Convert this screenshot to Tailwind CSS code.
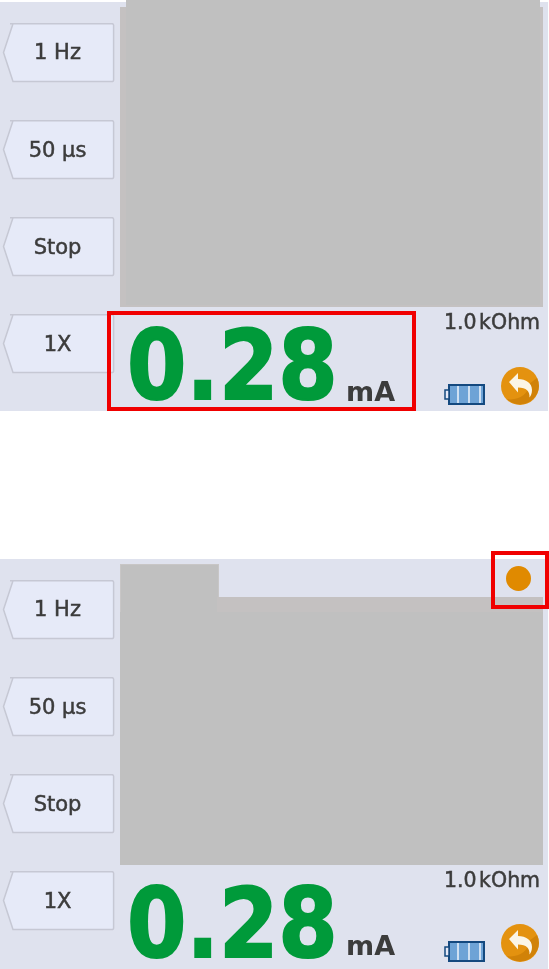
<!DOCTYPE html>
<html><head><meta charset="utf-8"><script src="https://cdn.jsdelivr.net/npm/@tailwindcss/browser@4"></script></head>
<body class="bg-white w-[549px] h-[969px] overflow-hidden relative font-['DejaVu_Sans',sans-serif]">
<svg class="hidden"><defs>
<g id="btn"><path d="M10 .7H112a1.600 1.600 0 0 1 1.600 1.600V57a1.600 1.600 0 0 1-1.600 1.600H13L3.500 29.500 13 .7Z" fill="#e6eaf8" stroke="#c6c8d4" stroke-width="1.500"/></g>
<g id="batt"><rect x="5" y="1" width="35" height="19" fill="#6ea3d6" stroke="#14497f" stroke-width="2"/><rect x="1" y="6" width="4" height="9" fill="#e6eaf8" stroke="#14497f" stroke-width="1.500"/><path d="M14 2v17M25 2v17M36 2v17" stroke="#cfe0f2" stroke-width="2"/></g>
<g id="back"><circle cx="19" cy="19" r="19" fill="#e4920f"/><path d="M28 17C28 28 16 34 6 32a19 19 0 0 0 27-1 19 19 0 0 0 5-12 19 19 0 0 0-2-8Z" fill="#c67a05" opacity=".65"/><path d="M8 15 17 6v6c8 0 14 4 14 11 0 3-1 5.500-2.500 7.500 .5-6-3-10-11.500-10v5Z" fill="#fbf5e6"/></g>
</defs></svg>

<section class="relative mt-[2px] w-[548px] h-[409px] bg-[#dfe2ee] flex">
 <div class="w-[120px] pt-[20.500px] flex flex-col gap-[38.300px] shrink-0">
  <div class="relative h-[59px] w-[116px]"><svg class="absolute inset-0" width="116" height="60"><use href="#btn"/></svg><span class="absolute inset-0 pr-[1px] pt-[2px] flex items-center justify-center text-[21px] text-[#3c3c3c] blur-[0.4px] [-webkit-text-stroke:0.5px_#3c3c3c]">1 Hz</span></div>
  <div class="relative h-[59px] w-[116px]"><svg class="absolute inset-0" width="116" height="60"><use href="#btn"/></svg><span class="absolute inset-0 pr-[1px] pt-[2px] flex items-center justify-center text-[21px] text-[#3c3c3c] blur-[0.4px] [-webkit-text-stroke:0.5px_#3c3c3c]">50 µs</span></div>
  <div class="relative h-[59px] w-[116px]"><svg class="absolute inset-0" width="116" height="60"><use href="#btn"/></svg><span class="absolute inset-0 pr-[1px] pt-[2px] flex items-center justify-center text-[21px] text-[#3c3c3c] blur-[0.4px] [-webkit-text-stroke:0.5px_#3c3c3c]">Stop</span></div>
  <div class="relative h-[59px] w-[116px]"><svg class="absolute inset-0" width="116" height="60"><use href="#btn"/></svg><span class="absolute inset-0 pr-[1px] pt-[2px] flex items-center justify-center text-[21px] text-[#3c3c3c] blur-[0.4px] [-webkit-text-stroke:0.5px_#3c3c3c]">1X</span></div>
 </div>
 <div class="flex-1 flex flex-col pt-[5px]">
  <div class="h-[300px] w-[423px] bg-[#c4c1c1]"></div>
  <div class="flex-1 relative">
   <div class="absolute left-[7px] top-[14px] h-[90px] text-[96px] leading-[90px] font-bold text-[#009a3a] [-webkit-text-stroke:2px_#009a3a] origin-left scale-x-[0.89] whitespace-nowrap">0.28</div>
   <div class="absolute left-[226px] top-[70px] text-[27px] leading-[30px] font-bold text-[#3c3c3c] blur-[0.3px]">mA</div>
   <div class="absolute left-[324px] top-[2px] text-[20.500px] leading-[26px] text-[#3c3c3c] blur-[0.4px] [-webkit-text-stroke:0.5px_#3c3c3c] whitespace-nowrap [word-spacing:-4px]">1.0 kOhm</div>
   <svg class="absolute left-[324px] top-[77px]" width="44" height="22"><use href="#batt"/></svg>
   <svg class="absolute left-[381px] top-[60px]" width="38" height="38"><use href="#back"/></svg>
  </div>
 </div>
 <div class="absolute left-[126px] top-[-2px] w-[414px] h-[7px] bg-[#c0c0c0]"></div>
 <div class="absolute left-[126px] top-[5px] w-[414px] h-[298px] bg-[#c0c0c0]"></div>
 <div class="absolute left-[107px] top-[309px] w-[309px] h-[100px] border-[4px] border-[#f00000]"></div>
</section>

<section class="absolute left-0 top-[559px] w-[548px] h-[410px] bg-[#dfe2ee] flex">
 <div class="w-[120px] pt-[20.500px] flex flex-col gap-[38.300px] shrink-0">
  <div class="relative h-[59px] w-[116px]"><svg class="absolute inset-0" width="116" height="60"><use href="#btn"/></svg><span class="absolute inset-0 pr-[1px] pt-[2px] flex items-center justify-center text-[21px] text-[#3c3c3c] blur-[0.4px] [-webkit-text-stroke:0.5px_#3c3c3c]">1 Hz</span></div>
  <div class="relative h-[59px] w-[116px]"><svg class="absolute inset-0" width="116" height="60"><use href="#btn"/></svg><span class="absolute inset-0 pr-[1px] pt-[2px] flex items-center justify-center text-[21px] text-[#3c3c3c] blur-[0.4px] [-webkit-text-stroke:0.5px_#3c3c3c]">50 µs</span></div>
  <div class="relative h-[59px] w-[116px]"><svg class="absolute inset-0" width="116" height="60"><use href="#btn"/></svg><span class="absolute inset-0 pr-[1px] pt-[2px] flex items-center justify-center text-[21px] text-[#3c3c3c] blur-[0.4px] [-webkit-text-stroke:0.5px_#3c3c3c]">Stop</span></div>
  <div class="relative h-[59px] w-[116px]"><svg class="absolute inset-0" width="116" height="60"><use href="#btn"/></svg><span class="absolute inset-0 pr-[1px] pt-[2px] flex items-center justify-center text-[21px] text-[#3c3c3c] blur-[0.4px] [-webkit-text-stroke:0.5px_#3c3c3c]">1X</span></div>
 </div>
 <div class="flex-1 flex flex-col">
  <div class="h-[306px] relative">
   <div class="absolute left-0 top-[5px] w-[99px] h-[301px] bg-[#c0c0c0] border border-[#c8c6c6]"></div>
   <div class="absolute left-[97px] top-[38px] w-[326px] h-[15px] bg-[#c4c1c1]"></div>
   <div class="absolute left-0 top-[53px] w-[423px] h-[253px] bg-[#c0c0c0]"></div>
  </div>
  <div class="flex-1 relative">
   <div class="absolute left-[7px] top-[14px] h-[90px] text-[96px] leading-[90px] font-bold text-[#009a3a] [-webkit-text-stroke:2px_#009a3a] origin-left scale-x-[0.89] whitespace-nowrap">0.28</div>
   <div class="absolute left-[226px] top-[66px] text-[27px] leading-[30px] font-bold text-[#3c3c3c] blur-[0.3px]">mA</div>
   <div class="absolute left-[324px] top-[2px] text-[20.500px] leading-[26px] text-[#3c3c3c] blur-[0.4px] [-webkit-text-stroke:0.5px_#3c3c3c] whitespace-nowrap [word-spacing:-4px]">1.0 kOhm</div>
   <svg class="absolute left-[324px] top-[76px]" width="44" height="22"><use href="#batt"/></svg>
   <svg class="absolute left-[381px] top-[59px]" width="38" height="38"><use href="#back"/></svg>
  </div>
 </div>
 <div class="absolute left-[506px] top-[7px] w-[25px] h-[25px] rounded-full bg-[#e08a00]"></div>
 <div class="absolute left-[491px] top-[-8px] w-[58px] h-[58px] border-[4px] border-[#f00000]"></div>
</section>
</body></html>
